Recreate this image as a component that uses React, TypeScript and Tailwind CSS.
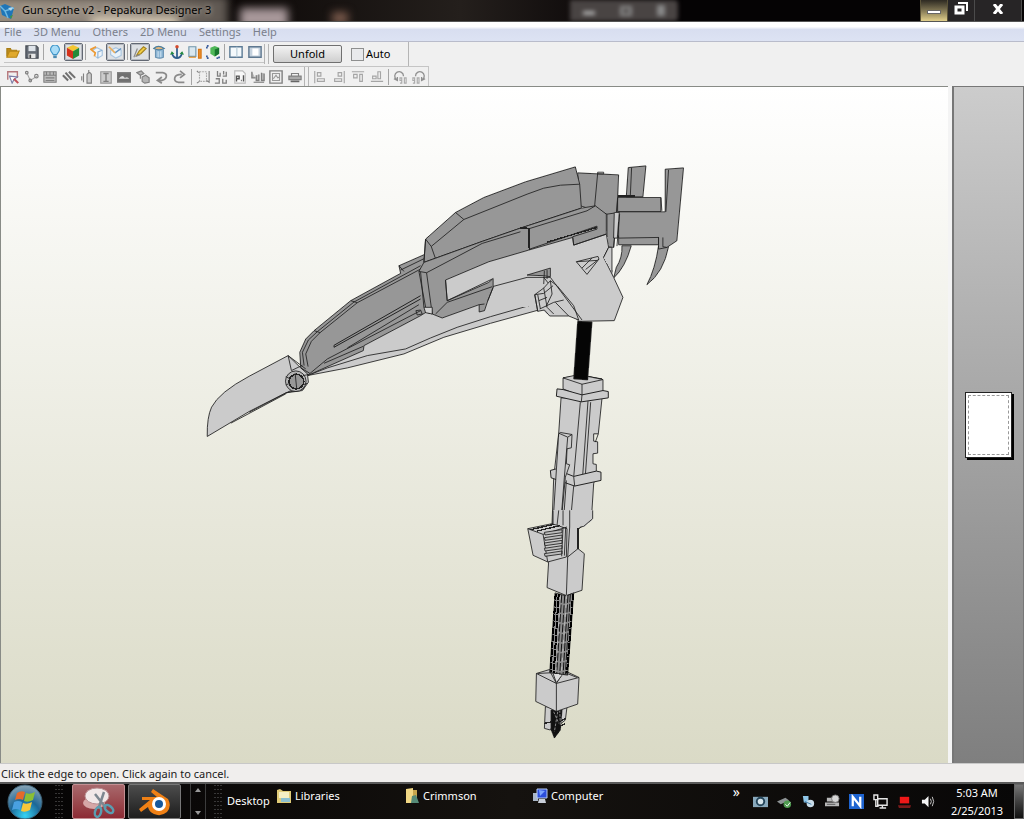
import type { ReactNode } from 'react'

type Tool = { label: string; icon: ReactNode; active?: boolean }

const Icon = ({ children }: { children: ReactNode }) => (
  <svg viewBox="0 0 16 16" className="h-[14px] w-[14px]" fill="none" stroke="#808080" strokeWidth="1.3">{children}</svg>
)

const fileTools: Tool[] = [
  { label: 'Open', icon: <Icon><path d="M1 13V4h4l1 2h6v2" fill="#b98a1f" stroke="#a87c14" /><path d="M1 14l3-7h11l-3 7z" fill="#e0a92c" stroke="#b98716" /></Icon> },
  { label: 'Save', icon: <Icon><path d="M1 1h12l2 2v12H1z" fill="#666c75" stroke="#444a52" /><path d="M4 1h8v6H4z" fill="#dfe4ea" stroke="none" /><path d="M4 10h8v5H4z" fill="#e8e8e8" stroke="none" /><path d="M5 11h2v4H5z" fill="#444" stroke="none" /></Icon> },
]

const viewTools: Tool[] = [
  { label: 'Light', icon: <Icon><path d="M8 0a5 5 0 0 1 4 8l-2 3H6L4 8a5 5 0 0 1 4-8z" fill="#a9dcf7" stroke="#3f95c9" /><path d="M6 12h4v3H6z" fill="#4c8ab0" stroke="none" /></Icon> },
  { label: 'Texture', active: true, icon: <Icon><path d="M8 0l7 3-7 4-7-4z" fill="#f4c631" stroke="none" /><path d="M1 3l7 4v9l-7-4z" fill="#d5321c" stroke="none" /><path d="M15 3L8 7v9l7-4z" fill="#238b38" stroke="none" /></Icon> },
]

const modelTools: Tool[] = [
  { label: 'Faces', icon: <Icon><path d="M3 6l5-3 6 3v6l-5 3-3-2" fill="#eff5fb" stroke="#a5c3df" /><path d="M14 6L9 8v7" stroke="#8ab0d5" /><path d="M7 2L1 5l5 4-1 4" stroke="#ec9a35" strokeWidth="2" /></Icon> },
  { label: 'Edges', active: true, icon: <Icon><path d="M3 6l6-3 6 3v6l-6 3-6-4z" fill="#e9f2fa" stroke="#a9c4de" /><path d="M8 9l7-5" stroke="#5f92c5" strokeWidth="1.6" /><path d="M1 2l7 7" stroke="#e8ae60" strokeWidth="2" /></Icon> },
]

const editTools: Tool[] = [
  { label: 'Edge color', active: true, icon: <Icon><path d="M4 12L7 7l5-5 3 2-6 6z" fill="#f2ce45" stroke="#a58422" /><path d="M1 14L5 4M3 13l5-2" stroke="#898989" /></Icon> },
  { label: 'Cylinder', icon: <Icon><path d="M4 5v9q5 2 9 0V5" fill="#8fb7d6" stroke="#6b93b2" /><path d="M2 4q5-5 12 0-6 3-12 0z" fill="#e4b67d" stroke="#4a7e9f" /><path d="M7 7v7M10 7v7" stroke="#c8deed" /></Icon> },
  { label: 'Anchor', icon: <Icon><path d="M8 3v12M2 9q2 6 6 6t6-6" stroke="#2e5d8c" strokeWidth="2" /><path d="M0 11l2-4 3 3zM16 11l-2-4-3 3z" fill="#238b3f" stroke="none" /><circle cx="8" cy="2" r="2" fill="#d44a2c" stroke="none" /></Icon> },
  { label: 'Flip', icon: <Icon><path d="M1 2h8v11H1z" fill="#d9e7ef" stroke="#6f95ab" /><path d="M12 5h3v10h-3z" fill="#ec8d2a" stroke="#d77716" /><path d="M1 14h8" stroke="#e8952e" /></Icon> },
  { label: 'Fit', icon: <Icon><path d="M5 3l5-2 5 2v7l-5 3-5-3z" fill="#4fb758" stroke="none" /><path d="M10 5l5-2v7l-5 3z" fill="#16752d" stroke="none" /><path d="M1 4V1h3M1 12v3h3M12 15h3v-3" stroke="#3b5d9c" strokeWidth="2" strokeDasharray="2 1" /></Icon> },
]

const windowTools: Tool[] = [
  { label: 'Two panes', icon: <Icon><path d="M1 2h14v12H1z" fill="#f4f9fc" stroke="#5c7b95" strokeWidth="1.6" /><path d="M9 2v12" stroke="#b3c8d6" /></Icon> },
  { label: 'One pane', icon: <Icon><path d="M1 2h14v12H1z" fill="#c5d2de" stroke="#5f7890" strokeWidth="1.6" /><path d="M5 4h7v8H5z" fill="#fff" stroke="none" /></Icon> },
]

const unfoldTools: Tool[] = [
  { label: 'Select', icon: <Icon><path d="M2 11V2h11v7" stroke="#b5777b" strokeWidth="1.6" /><path d="M4 7l9 1-4 3-2 4z" fill="#fff" stroke="#7c7fa8" /><path d="M9 10l5 5" stroke="#c0525a" strokeWidth="2.4" /></Icon> },
  { label: 'Join', icon: <Icon><path d="M2 3l4 9 8-5" stroke="#a5a5a5" /><circle cx="2" cy="3" r="1.5" /><circle cx="6" cy="12" r="1.5" /><circle cx="13" cy="7" r="2" /></Icon> },
  { label: 'Flaps', icon: <Icon><path d="M1 2h14v12H1z" fill="#bcbcbc" /><path d="M1 6h14M4 2v4M8 2v4M12 2v4M3 9h10M3 12h10" /></Icon> },
  { label: 'Edges', icon: <Icon><path d="M1 6l6 6M4 3l7 8M8 2l7 7" strokeWidth="2.4" stroke="#707070" /></Icon> },
  { label: 'Glue', icon: <Icon><path d="M8 5q3-4 5 0v10H8zM10 3V0" fill="#ccc" /><path d="M4 4v10M2 7v5" /></Icon> },
  { label: 'Text', icon: <Icon><path d="M2 2h12v13H2z" fill="#ccc" stroke="#999" /><path d="M5 4h6M8 4v9M5 13h6" strokeWidth="1.6" /></Icon> },
  { label: 'Image', icon: <Icon><path d="M0 3h16v11H0z" fill="#707070" /><path d="M2 10q4-6 7-1 3-2 5 1z" fill="#ddd" stroke="none" /></Icon> },
  { label: 'Box', icon: <Icon><path d="M1 3l5-2 3 3-4 2zM5 6v4M7 8l4-2 4 3v5l-5 1-3-2z" fill="#b5b5b5" /></Icon> },
  { label: 'Undo', icon: <Icon><path d="M2 3h8q5 1 4 5t-8 4M9 8l-5 4 5 3" strokeWidth="2" stroke="#8a8a8a" /></Icon> },
  { label: 'Redo', icon: <Icon><path d="M13 14H6q-5-1-4-5t8-4M8 1l5 4-5 4" strokeWidth="2" stroke="#8a8a8a" /></Icon> },
]

const pageTools: Tool[] = [
  { label: 'Bounds', icon: <Icon><path d="M4 2h8v11H4z" strokeDasharray="2 1" stroke="#aaa" /><path d="M1 1l2 2M15 1v13l-3-2M1 15l3-2" /></Icon> },
  { label: 'Arrange', icon: <Icon><path d="M4 1v6h3V3M10 7h4V2M2 10h4v5H1M10 10v5h4v-4M11 1v4" strokeWidth="1.5" /></Icon> },
  { label: 'Page', icon: <Icon><path d="M2 1h9l3 3v11H2z" fill="#f8f8f8" stroke="#bbb" /><path d="M4 13V7h3v3H4M9 12h1M12 6v7" stroke="#555" strokeWidth="1.6" /></Icon> },
  { label: 'Scale', icon: <Icon><path d="M1 2v7h4M6 6v6h3V5M12 3v9h3V4" fill="#bbb" strokeWidth="1.5" /><path d="M3 14h12" /></Icon> },
  { label: 'Preview', icon: <Icon><path d="M1 1h14v14H1z" strokeWidth="1.6" /><path d="M4 4h8v8H4zM5 10l3-4 2 3 2-1" stroke="#999" /></Icon> },
  { label: 'Print', icon: <Icon><path d="M4 7V4h8v3" /><path d="M1 7h14v4H1z" fill="#aaa" /><path d="M3 13h10" stroke="#666" strokeWidth="2" /></Icon> },
]

const alignTools: Tool[] = [
  { label: 'Align left', icon: <Icon><path d="M2 1v14M5 3h4v4H5zM5 10h8v3H5z" stroke="#a5a5a5" /></Icon> },
  { label: 'Align right', icon: <Icon><path d="M14 1v14M7 3h4v4H7zM3 10h8v3H3z" stroke="#a5a5a5" /></Icon> },
  { label: 'Align top', icon: <Icon><path d="M1 2h14M3 5h4v4H3zM10 5h3v8h-3z" stroke="#a5a5a5" /></Icon> },
  { label: 'Align bottom', icon: <Icon><path d="M1 13h14M3 7h4v3H3zM9 2h3v8H9z" stroke="#a5a5a5" /></Icon> },
]

const rotateTools: Tool[] = [
  { label: 'Rotate left 90', icon: <Icon><path d="M4 11a5 5 0 1 1 8-4M1 10l4 2V8" strokeWidth="1.5" stroke="#909090" /><path d="M8 9h2v3H8zM10 10v5H8M13 9h2v6h-2z" stroke="#aaa" /></Icon> },
  { label: 'Rotate right 90', icon: <Icon><path d="M4 7a5 5 0 1 1 8 4M15 10l-4 2V8" strokeWidth="1.5" stroke="#909090" /><path d="M1 9h2v3H1zM3 10v5H1M6 9h2v6H6z" stroke="#aaa" /></Icon> },
]

const Group = ({ tools, width }: { tools: Tool[]; width: string }) => (
  <div className={`flex ${width}`}>
    {tools.map((tool) => (
      <button
        key={tool.label}
        aria-label={tool.label}
        className={`flex h-[18px] min-w-0 flex-1 items-center justify-center ${tool.active ? 'rounded-xs border border-[#626873] bg-[#dde0e4] outline-1 -outline-offset-2 outline-[#b4b8bf]' : ''}`}
      >
        {tool.icon}
      </button>
    ))}
  </div>
)

const Separator = () => <div className="mx-[2px] h-4 w-px bg-[#a5a5a5]" />

const TitleBar = () => (
  <header className="relative flex h-[22px] items-center overflow-hidden border-b border-[#555] bg-linear-to-r from-[#0d0908] from-22% via-[#241f1c] via-45% to-[#050304] to-65%">
    <div className="absolute -left-3 -top-1 h-8 w-60 bg-linear-to-r from-[#9a8f80] via-[#8f857b] to-[#5d5650] blur-xs" />
    <div className="absolute left-[90px] top-4 h-3 w-[90px] rounded-full bg-[#d6c9b4] blur-xs" />
    <div className="absolute left-[240px] top-2 h-5 w-12 bg-[#a8989a] blur-xs" />
    <div className="absolute left-[332px] top-3 h-3 w-4 bg-[#7a5a4c] blur-xs" />
    <div className="absolute left-[570px] top-0 flex h-[21px] w-[108px] items-center justify-around rounded-r bg-[#494443] blur-[2px]">
      <span className="mt-1 h-[4px] w-3 bg-[#aaa]" />
      <span className="h-[10px] w-3 border-3 border-[#888]" />
      <span className="h-[11px] w-2 bg-[#888]" />
    </div>
    <svg viewBox="0 0 18 18" className="relative h-[18px] w-[18px] shrink-0">
      <path d="M0 4l5-2 9 4-3 11L2 13z" fill="#1f76b8" />
      <path d="M0 4l5 5 9-3M5 9l3 7" stroke="#6fb9e2" strokeWidth="1.5" fill="none" />
      <path d="M8 6l5-1-2 4z" fill="#b5daee" />
      <path d="M10 14l3-1-2 4z" fill="#3d9448" />
    </svg>
    <h1 className="relative ml-1 flex-1 whitespace-nowrap text-[11px] text-black [text-shadow:0_0_5px_#c9c0b5]">Gun scythe v2 - Pepakura Designer 3</h1>
    <div className="relative flex h-full">
      <button aria-label="Minimize" className="flex w-[28px] items-end justify-center border-x border-[#5a5238] bg-linear-to-b from-[#2e2a22] to-[#e2d08c] pb-[7px]">
        <span className="h-1 w-[14px] border border-[#666] bg-white" />
      </button>
      <button aria-label="Restore" className="flex w-[27px] items-start justify-center border-r border-[#4b4b4b] bg-[#272526] pt-[2px]">
        <svg viewBox="0 0 14 13" className="h-[13px] w-[14px]" fill="none" stroke="#fff">
          <path d="M4 1h9v8" strokeWidth="2" />
          <path d="M2 5h7v6H2z" strokeWidth="3" />
        </svg>
      </button>
      <button aria-label="Close" className="flex w-[47px] items-start justify-center border-r border-[#4b4b4b] bg-[#272526] pt-1">
        <svg viewBox="0 0 12 10" className="h-[10px] w-3" fill="none" stroke="#fff" strokeWidth="3">
          <path d="M2 0l8 10M10 0L2 10" />
        </svg>
      </button>
      <div className="w-[2px]" />
    </div>
  </header>
)

const menus = ['File', '3D Menu', 'Others', '2D Menu', 'Settings', 'Help']

const MenuBar = () => (
  <nav className="flex h-5 items-center gap-3 border-b border-[#b9bccb] bg-linear-to-b from-white from-25% via-[#d8def0] via-40% to-[#dde3f3] pl-1 pt-px text-[#7b808c]">
    {menus.map((menu) => (
      <button key={menu} className="text-[11px]">{menu}</button>
    ))}
  </nav>
)

const Toolbars = () => (
  <div className="flex flex-col bg-[#f0f0f0]">
    <div className="flex h-6 w-fit items-center border-r border-[#b5b5b5] pl-1">
      <div className="flex items-center self-start border-b border-[#c5c5c5] pb-px pt-px">
        <Group tools={fileTools} width="w-[37px]" />
        <Separator />
        <Group tools={viewTools} width="w-[37px]" />
        <Separator />
        <Group tools={modelTools} width="w-[37px]" />
        <Separator />
        <Group tools={editTools} width="w-[92px]" />
        <Separator />
        <Group tools={windowTools} width="w-[37px]" />
      </div>
      <div className="mr-1 h-5 w-[5px] border-x border-[#b5b5b5]" />
      <button className="h-[18px] w-[69px] rounded-xs border border-[#707070] bg-linear-to-b from-[#f3f3f3] to-[#cfcfcf] text-[11px] leading-4 text-black">Unfold</button>
      <label className="ml-[9px] flex w-[57px] items-center gap-[2px] text-[11px] text-black">
        <input type="checkbox" className="h-[13px] w-[13px] appearance-none border border-[#8e8f8f] bg-[#e9eaec]" />
        Auto
      </label>
    </div>
    <div className="flex h-5 w-fit items-center border-r border-t border-[#c5c5c5] pl-1">
      <Group tools={unfoldTools} width="w-[185px]" />
      <Separator />
      <Group tools={pageTools} width="w-[110px]" />
      <div className="mr-[2px] h-full w-[5px] border-x border-[#b5b5b5]" />
      <Group tools={alignTools} width="w-[75px]" />
      <Separator />
      <Group tools={rotateTools} width="w-[37px]" />
    </div>
  </div>
)

// Dark lines of the ribbed magazine next to the grip
const ribs = [58, 74, 90, 106, 122]

const Model = () => (
  <svg viewBox="0 86 948 677" className="h-full w-full" shapeRendering="crispEdges" stroke="#222" strokeLinejoin="round" fill="none">
    {/* blade */}
    <g transform="translate(190 230) scale(.33333)" strokeWidth="2.6">
      <path d="M350 435L470 412 640 370 760 320 900 278 1045 238V120L900 100 740 240 690 235z" fill="#cbcbcb" stroke="none" />
      <path d="M350 435L410 412 530 375 645 355 720 322 800 290 900 258 1040 218" />
      <path d="M350 435L470 412 640 370 760 320 900 278 1045 238" />
      <path d="M330 410L327 365 345 325 370 300 480 210 630 128 625 105 700 72 720 90 690 120 722 235 690 255 520 345 518 360 350 435z" fill="#979797" />
      <path d="M340 405L335 365 353 328 380 303 490 214 690 105" />
      <path d="M352 408L345 370 362 332 388 306 500 216 690 115" />
      <path d="M630 118L700 84M625 105L640 122M480 210L500 216M370 300L388 306" />
      <path d="M350 435L410 385 690 240M400 398L518 347" />
      <path d="M430 344L690 195 M430 350L690 205M430 344V350" strokeWidth="3" />
      <path d="M470 352L685 222M676 240L690 238 695 250 680 253z" />
      <path d="M292 375L175 437Q85 485 62 530 48 560 49 618L175 543 285 487 335 480 353 455 350 430 330 412z" fill="#cbcbcb" />
      <path d="M292 375L302 420 335 404M292 375L345 415M120 578L285 490M175 545L300 480M285 487L340 474" />
      <circle cx="315" cy="452" r="31" fill="#b4b4b4" />
      <circle cx="317" cy="453" r="22" fill="#979797" strokeWidth="5" />
      <path d="M313 427L318 476M285 438L296 444M286 463L297 458M337 435L353 432M340 462L350 458M330 412L357 428" />
    </g>

    {/* head */}
    <g transform="translate(400 150) scale(.33333)" strokeWidth="2.6">
      <path d="M693 285Q675 350 640 382L648 350Q667 320 665 285z" fill="#979797" />
      <path d="M805 288Q790 365 740 402 765 355 775 285z" fill="#979797" />
      <path d="M684 50L737 45 728 138H678z" fill="#979797" />
      <path d="M694 50L690 138" />
      <path d="M652 136H705" strokeWidth="5" />
      <path d="M652 140H782V183H652z" fill="#979797" />
      <path d="M655 255H775V282H655z" fill="#979797" />
      <path d="M795 55L850 51 830 270 800 290 775 295V260L655 262V183H795z" fill="#979797" />
      <path d="M805 57L797 183M788 260V288L800 290M782 140L785 180" />
      <path d="M532 66L655 72 650 190 640 290 620 288V190L540 165z" fill="#979797" />
      <path d="M592 68L583 165M652 140L640 290M658 190L650 286M620 190L655 185M592 64H610V69H592z" />
      <path d="M642 185H657L651 262H640z" fill="#cbcbcb" />
      <path d="M75 265L165 185 250 140 375 93 525 48 538 100 543 172 360 232 245 272 70 335z" fill="#979797" />
      <path d="M75 265L92 287 190 206 380 130 430 112 480 103 538 100M165 185L190 206M92 287L107 330M75 265L70 335" />
      <path d="M135 385L380 285 618 235 640 380 668 440 642 510H535L505 496 440 490 410 465 240 480 100 490z" fill="#cbcbcb" stroke="none" />
      <path d="M618 250L625 290 610 320 640 380 668 440 642 510 535 512 430 380H380L275 408" />
      <path d="M55 362L70 335 245 272 360 232 543 172 585 165 618 190 618 250 520 283 517 260 385 298 265 333 135 388 140 450 265 395 278 383V410L262 450 252 480 236 484V462L125 502 95 490 78 485z" fill="#979797" />
      <path d="M55 362L78 366 245 278 360 243M385 234L560 180 585 165M78 366L95 490M60 364L70 470" />
      <path d="M360 231L385 233 387 298" strokeWidth="5" />
      <path d="M385 296L590 226V235L517 258" />
      <path d="M440 274L590 230" strokeWidth="4" />
      <path d="M517 258L520 283 618 250" />
      <path d="M135 388L140 450 275 385M105 490L140 455 275 408M262 450L278 410M236 462L252 460" />
      <path d="M70 470H95V490L75 486z" fill="#d2d2d2" />
      <path d="M528 333L593 317 596 325 560 371z" fill="#cbcbcb" />
      <path d="M528 333L590 329M545 352L575 322M556 356L596 325" />
      <path d="M380 373L450 352V378L430 375z" fill="#979797" />
      <path d="M432 360L430 400M440 358V385" />
      <path d="M610 320L625 290H635V365" fill="#cbcbcb" />
      <path d="M403 432L430 412 450 390 470 405 520 465 535 508 505 496H448L432 478 412 482z" fill="#cbcbcb" />
      <path d="M403 432L412 482M412 432L420 475M428 380L450 380 545 508M430 412L440 470M450 390L455 430 437 468M403 432L430 428 458 405M415 450L440 440M418 475L460 455 490 448M465 455L505 496M440 470L460 490" />
    </g>

    {/* shaft and upper grip */}
    <g transform="translate(510 310) scale(.33333)" strokeWidth="2.6">
      <path d="M152 262L275 264 264 370 250 370V392L262 394V428L248 430V460L258 462V490L250 520 243 630 205 655 182 670 125 640 130 500 145 368z" fill="#cbcbcb" />
      <path d="M210 275L190 500M233 272L217 495M241 275L225 495M264 370L255 395" />
      <path d="M158 202L190 197 212 220 275 205 235 198 278 207V245L215 258 158 235z" fill="#cbcbcb" />
      <path d="M158 202L205 192 278 207 215 221z" fill="#cbcbcb" />
      <path d="M215 221V255" />
      <path d="M202 32L245 34 232 208 190 205z" fill="#050505" />
      <path d="M140 235L158 237 215 253 278 240 294 243V262L213 274 138 257z" fill="#cbcbcb" strokeWidth="3" />
      <path d="M215 253L213 274" />
      <path d="M120 480L135 476 190 498 258 482 272 485V510L193 527 122 502z" fill="#cbcbcb" strokeWidth="3" />
      <path d="M190 498L193 527" />
      <path d="M145 370L150 366 185 372 183 412 170 415 168 460 178 463 165 500 150 660 127 650z" fill="#cbcbcb" />
      <path d="M145 368L172 380 185 372M172 380L162 500 150 655M190 527L178 660M168 510L158 650" />
    </g>

    {/* lower grip, rod and pommel */}
    <g transform="translate(510 510) scale(.33333)" strokeWidth="2.6">
      <path d="M128 0H247V25L243 32 222 50H210L203 58V115L222 130 215 240 168 256 110 232 115 150 128 50z" fill="#cbcbcb" stroke="none" />
      <path d="M247 0V25L220 48 210 50 203 58V115L222 130 215 240 168 256 110 232 115 150M128 0V40M145 0L140 45M178 0V50L172 140 168 256M158 0V45M172 140L203 115" />
      <path d="M203 52V115" strokeWidth="6" />
      <path d="M52 55L125 40 170 55 168 140 112 155 68 135z" fill="#cbcbcb" />
      <path d="M52 55L98 72 170 50M98 72L112 155" />
      <path d="M60 58L130 42M80 62L148 46" strokeWidth="4" />
      {ribs.map((y) => (
        <path key={y} d={`M102 ${y + 8}L155 ${y}V${y + 9}L104 ${y + 16}z`} fill="#bbb" />
      ))}
      <path d="M158 50L154 138M166 50L162 136" />
      <path d="M134 248L168 257 190 248 172 495 118 488z" fill="#8b8b8b" />
      <path d="M136 250L120 490M145 252L130 490M188 252L170 490" stroke="#000" strokeWidth="6" strokeDasharray="18 3" />
      <path d="M154 254L139 492M163 256L148 495M173 254L158 495M180 252L165 492" stroke="#111" strokeWidth="3" strokeDasharray="24 5" />
      <path d="M150 256L136 490M169 254L153 490" stroke="#d4d4d4" strokeWidth="2" strokeDasharray="12 15" />
      <path d="M105 590L102 655 120 660 130 640 150 642 165 630 170 590z" fill="#cbcbcb" />
      <path d="M102 640L125 635M145 635L168 625M145 650L165 640" strokeWidth="4" />
      <path d="M122 600L155 598 150 660 132 684 122 658z" fill="#111" />
      <path d="M130 605L145 640M142 605L132 665M148 600L150 645" stroke="#999" strokeDasharray="8 4" />
      <path d="M78 490L118 478 118 488 172 495 172 486 206 502 202 582 138 604 76 574z" fill="#cbcbcb" />
      <path d="M78 490L138 520 206 502M138 520V604M118 482L138 520 155 492M82 490L120 488M165 488L200 502" />
      <path d="M128 490L138 518 155 495" fill="#ddd" />
    </g>
  </svg>
)

const Workspace = () => (
  <main className="flex min-h-0 flex-1">
    <section aria-label="3D view" className="min-w-0 flex-1 border-l border-t border-[#888b86] bg-linear-to-b from-white to-[#dadac6]">
      <Model />
    </section>
    <div className="w-1 bg-[#f4f4f4]" />
    <aside aria-label="2D view" className="flex w-[72px] items-center justify-center border-l-2 border-r border-t border-[#777] bg-linear-to-b from-[#cccccc] to-[#7f7f7f]">
      <div className="h-[66px] w-[47px] border border-[#222] bg-white p-[2px] shadow-[2px_2px_0_#000]">
        <div className="h-full border border-dashed border-[#999]" />
      </div>
    </aside>
  </main>
)

const Grip = () => (
  <svg viewBox="0 0 9 34" className="h-[34px] w-[9px] shrink-0">
    <path d="M1 0v34M4 0v34M7 0v34" stroke="#666" strokeDasharray="1 3" />
  </svg>
)

const Scissors = () => (
  <svg viewBox="0 0 36 34" className="h-[34px] w-9">
    <ellipse cx="13" cy="18" rx="11" ry="6" fill="#d6a7a7" />
    <ellipse cx="16" cy="11" rx="12" ry="8" fill="#f1e8e8" stroke="#b98d90" />
    <path d="M14 9l11 14M23 7l-5 15" stroke="#7d8790" strokeWidth="2.5" />
    <ellipse cx="17" cy="27" rx="3" ry="5" fill="none" stroke="#5a9db0" strokeWidth="2.5" transform="rotate(15 17 27)" />
    <ellipse cx="28" cy="24" rx="3" ry="5" fill="none" stroke="#5a9db0" strokeWidth="2.5" transform="rotate(-50 28 24)" />
  </svg>
)

const Blender = () => (
  <svg viewBox="0 0 34 28" className="h-7 w-[34px]">
    <path d="M15 1l15 10q4 7-1 13-6 5-13 2-5-2-6-7l-7 5-2-3L12 12H4V9h15l-6-5z" fill="#ef8015" />
    <circle cx="21" cy="16" r="7" fill="#fff" />
    <circle cx="21" cy="16" r="4" fill="#17589b" />
  </svg>
)

const StartOrb = () => (
  <svg viewBox="0 0 36 36" className="h-9 w-9">
    <defs>
      <radialGradient id="orb" cx=".5" cy=".9" r=".9">
        <stop offset="0" stopColor="#35d4f5" />
        <stop offset=".5" stopColor="#1c6797" />
        <stop offset="1" stopColor="#8ba5b5" />
      </radialGradient>
    </defs>
    <circle cx="18" cy="18" r="17" fill="url(#orb)" stroke="#3c6075" />
    <path d="M10 9q4-3 8-1l-2 8q-4-2-8 0z" fill="#e56a2b" />
    <path d="M19 9q4 2 9-1l-2 8q-5 3-9 1z" fill="#8abf35" />
    <path d="M7 18q4-2 8 0l-2 8q-4-2-8 0z" fill="#49a0e0" />
    <path d="M16 19q4 2 9-1l-2 8q-5 3-9 1z" fill="#f7c739" />
  </svg>
)

const shortcuts = [
  { name: 'Libraries', icon: <><path d="M1 2l3-1 3 2h8v12H1z" fill="#e0cb78" /><path d="M3 4h10v6H3z" fill="#f5efc4" /><path d="M5 10h9v4H5z" fill="#8cc0d0" /></> },
  { name: 'Crimmson', icon: <><path d="M2 1l7-1v15H2z" fill="#f1d784" /><path d="M9 2h4v12H9z" fill="#c8a64c" /><path d="M8 8l4-1 3 8H7z" fill="#558a77" /></> },
  { name: 'Computer', icon: <><path d="M1 5h5v8H1z" fill="#a9b6c8" /><path d="M5 1h10v9H5z" fill="#2c4fdd" stroke="#b9cdf0" /><path d="M7 2l6 1-5 5z" fill="#7ba4ff" /><path d="M7 11h6l1 4H6z" fill="#c8ced8" /></> },
]

const trayIcons = [
  { name: 'Camera', icon: <><path d="M0 3h16v11H0z" fill="#89a9bd" /><circle cx="8" cy="8" r="4" fill="#d6e4eb" stroke="#24455a" strokeWidth="2" /></> },
  { name: 'Safely remove', icon: <><path d="M0 8l9-4 4 3-9 4z" fill="#8d9294" /><circle cx="11" cy="11" r="4" fill="#4f9b50" /><path d="M9 11l2 2 3-4" stroke="#fff" fill="none" /></> },
  { name: 'Sync', icon: <><path d="M2 2h6v7H3z" fill="#8fc6e8" /><circle cx="10" cy="10" r="4" fill="#c9dce8" /><path d="M4 8l7 3" stroke="#3b7ba8" /></> },
  { name: 'Drive', icon: <><path d="M2 4h7v4H2zM0 9h15v4H0z" fill="#b8b8b8" /><circle cx="11" cy="5" r="4" fill="#d5d5d5" stroke="#777" /><path d="M2 11h9" stroke="#555" /></> },
  { name: 'Notes', icon: <><path d="M0 0h16v16H0z" fill="#1e64d0" /><path d="M4 13V3l8 10V3" stroke="#fff" strokeWidth="2.4" fill="none" /></> },
  { name: 'Network', icon: <><path d="M5 5h10v7H5zM7 15h7M10 12v3" stroke="#e5e5e5" strokeWidth="1.5" fill="none" /><path d="M1 1h4v5H1zM3 6v7h3" stroke="#e5e5e5" strokeWidth="1.5" fill="none" /></> },
  { name: 'Monitor', icon: <><path d="M3 3h10v7H3z" fill="#f01818" /><path d="M1 12h14l-1 3H2z" fill="#7c1a1a" /></> },
  { name: 'Volume', icon: <><path d="M1 6h3l4-4v12l-4-4H1z" fill="#f5f5f5" /><path d="M10 5q2 3 0 6M12 3q3 5 0 10" stroke="#ccc" fill="none" /></> },
]

const Taskbar = () => (
  <footer className="flex h-[37px] items-center border-t-2 border-[#5a5a5a] bg-linear-to-r from-[#050404] via-[#15120f] to-[#080707] text-[11px] text-white">
    <button aria-label="Start" className="ml-[7px] mr-3"><StartOrb /></button>
    <Grip />
    <button aria-label="Snipping Tool" className="ml-2 flex h-full w-[53px] items-center justify-center rounded-xs border border-[#c28f92] bg-linear-to-b from-[#a8686c] to-[#8c2a34]"><Scissors /></button>
    <button aria-label="Blender" className="ml-[3px] flex h-full w-[53px] items-center justify-center rounded-xs border border-[#777] bg-linear-to-b from-[#4d4d4d] to-[#1e1e1e]"><Blender /></button>
    <div className="ml-[9px] mr-2 flex h-full w-4 flex-col items-center justify-between border-x border-[#3c3c3c] py-1 text-[#999]">
      <button aria-label="Scroll up"><svg viewBox="0 0 6 4" className="h-1 w-[6px]"><path d="M0 4l3-4 3 4z" fill="currentColor" /></svg></button>
      <button aria-label="Scroll down"><svg viewBox="0 0 6 4" className="h-1 w-[6px]"><path d="M0 0l3 4 3-4z" fill="currentColor" /></svg></button>
    </div>
    <Grip />
    <span className="ml-1 w-[49px]">Desktop</span>
    <div className="flex h-full flex-1 items-start pt-1">
      {shortcuts.map((item) => (
        <button key={item.name} className="flex w-32 items-center gap-[3px]">
          <svg viewBox="0 0 16 16" className="h-4 w-4">{item.icon}</svg>
          {item.name}
        </button>
      ))}
    </div>
    <button aria-label="More" className="mr-2 self-start text-[14px] leading-4">»</button>
    <div className="flex items-center">
      {trayIcons.map((item) => (
        <button key={item.name} aria-label={item.name} className="flex w-6 justify-center">
          <svg viewBox="0 0 16 16" className="h-[15px] w-[15px]">{item.icon}</svg>
        </button>
      ))}
    </div>
    <div className="mx-2 w-[58px] text-center leading-[18px]">
      <div>5:03 AM</div>
      <div>2/25/2013</div>
    </div>
    <button aria-label="Show desktop" className="h-full w-[10px] border border-[#666] bg-linear-to-b from-[#777] to-[#111]" />
  </footer>
)

const App = () => {
  return (
    <div className="flex h-screen flex-col overflow-hidden bg-[#f0f0f0] font-['Noto_Sans','Open_Sans',sans-serif]">
      <TitleBar />
      <MenuBar />
      <Toolbars />
      <Workspace />
      <div role="status" className="flex h-[19px] items-center border-t border-[#c8c8c8] bg-[#f0eeed] pl-px pt-[2px] text-[11px] text-[#1a1a1a]">
        Click the edge to open. Click again to cancel.
      </div>
      <Taskbar />
    </div>
  )
}

export default App
